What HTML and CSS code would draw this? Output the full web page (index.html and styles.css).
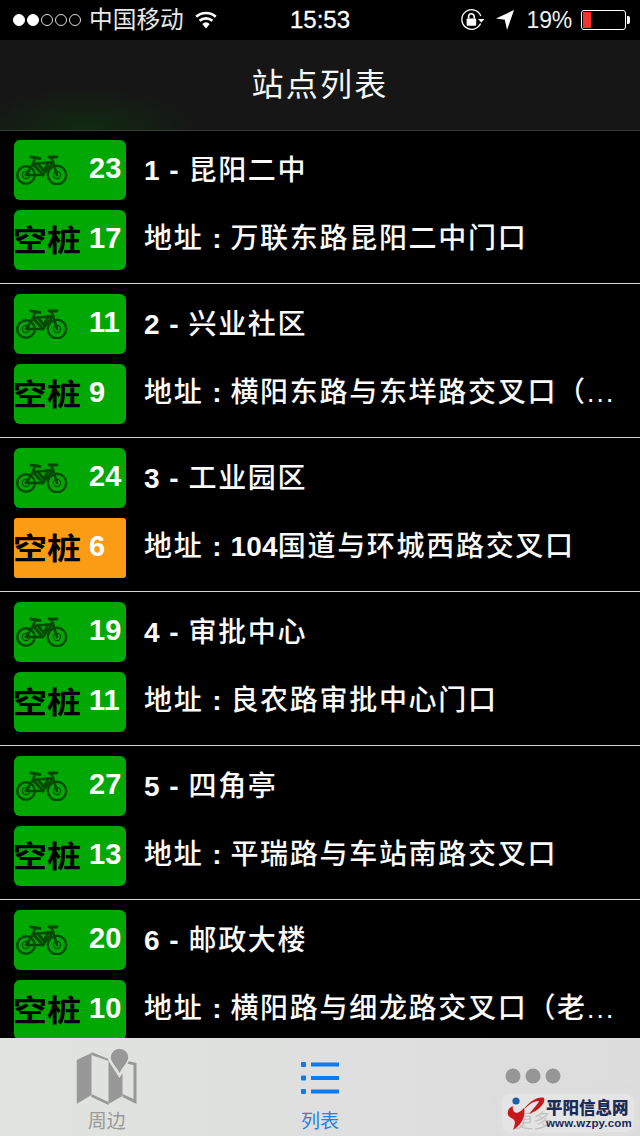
FILE: index.html
```html
<!DOCTYPE html>
<html lang="zh">
<head>
<meta charset="utf-8">
<title>站点列表</title>
<link rel="stylesheet" href="styles.css">
</head>
<body>
<svg class="defs" width="0" height="0" aria-hidden="true">
  <symbol id="bike" viewBox="0 0 52 30">
    <g fill="none" stroke="#044a04" stroke-width="2.4" stroke-linecap="round" stroke-linejoin="round">
      <circle cx="10" cy="20" r="8.800"/>
      <circle cx="41" cy="20" r="9.200"/>
      <circle cx="10" cy="20" r="3.600" stroke-width="1.200"/>
      <circle cx="41" cy="20" r="3.600" stroke-width="1.200"/>
      <path d="M10 20 17 9 37 7 27 20ZM37 7 41 20M17 9 19 3" stroke-width="2.600"/>
      <path d="M17 9 27 20 M22 9 28 16 32 8" stroke-width="2.800"/>
      <path d="M15 2 24 3.500M33 2 41 2M35 2 37 7" stroke-width="2.800"/>
    </g>
  </symbol>
</svg>
<div class="app">
  <header class="status">
    <div class="status-left">
      <span class="signal"><i class="on"></i><i class="on"></i><i></i><i></i><i></i></span>
      <span class="carrier">中国移动</span>
      <svg class="wifi" viewBox="0 0 24 18" width="24" height="18"><path d="M12 17.500 8.300 13a5.600 5.600 0 0 1 7.400 0Z" fill="#fff"/><path d="M5.600 9.800a9.600 9.600 0 0 1 12.800 0M2.200 5.800a14.600 14.600 0 0 1 19.600 0" fill="none" stroke="#fff" stroke-width="2.600"/></svg>
    </div>
    <div class="time">15:53</div>
    <div class="status-right">
      <svg class="lock" viewBox="0 0 24 24" width="24" height="24"><path d="M20.600 15.500A9.800 9.800 0 1 1 20.800 8" fill="none" stroke="#fff" stroke-width="1.300"/><path d="M18 11h6.500l-3.200 3.600Z" fill="#fff"/><rect x="6.600" y="10.400" width="9.600" height="7.400" rx="1" fill="#fff"/><path d="M8.600 10.600V8.600a2.800 2.800 0 0 1 5.600 0v2" fill="none" stroke="#fff" stroke-width="1.600"/></svg>
      <svg class="arrow" viewBox="0 0 18 20" width="18" height="20"><path d="M18 0 0 8.500l8.800 1.200L11 20Z" fill="#fff"/></svg>
      <span class="percent">19%</span>
      <span class="battery"><span class="battery-level"></span></span>
    </div>
  </header>

  <nav class="navbar"><h1>站点列表</h1></nav>

  <main class="list">
    <article class="row">
      <div class="badges">
        <div class="badge"><svg class="bike"><use href="#bike"/></svg><b class="num">23</b></div>
        <div class="badge"><span class="dock">空桩</span><b class="num">17</b></div>
      </div>
      <div class="info"><div class="name"><b>1 - </b>昆阳二中</div><div class="addr">地址<b class="colon">:</b>万联东路昆阳二中门口</div></div>
    </article>
    <article class="row">
      <div class="badges">
        <div class="badge"><svg class="bike"><use href="#bike"/></svg><b class="num">11</b></div>
        <div class="badge"><span class="dock">空桩</span><b class="num">9</b></div>
      </div>
      <div class="info"><div class="name"><b>2 - </b>兴业社区</div><div class="addr">地址<b class="colon">:</b>横阳东路与东垟路交叉口（...</div></div>
    </article>
    <article class="row">
      <div class="badges">
        <div class="badge"><svg class="bike"><use href="#bike"/></svg><b class="num">24</b></div>
        <div class="badge low"><span class="dock">空桩</span><b class="num">6</b></div>
      </div>
      <div class="info"><div class="name"><b>3 - </b>工业园区</div><div class="addr">地址<b class="colon">:</b><b>104</b>国道与环城西路交叉口</div></div>
    </article>
    <article class="row">
      <div class="badges">
        <div class="badge"><svg class="bike"><use href="#bike"/></svg><b class="num">19</b></div>
        <div class="badge"><span class="dock">空桩</span><b class="num">11</b></div>
      </div>
      <div class="info"><div class="name"><b>4 - </b>审批中心</div><div class="addr">地址<b class="colon">:</b>良农路审批中心门口</div></div>
    </article>
    <article class="row">
      <div class="badges">
        <div class="badge"><svg class="bike"><use href="#bike"/></svg><b class="num">27</b></div>
        <div class="badge"><span class="dock">空桩</span><b class="num">13</b></div>
      </div>
      <div class="info"><div class="name"><b>5 - </b>四角亭</div><div class="addr">地址<b class="colon">:</b>平瑞路与车站南路交叉口</div></div>
    </article>
    <article class="row">
      <div class="badges">
        <div class="badge"><svg class="bike"><use href="#bike"/></svg><b class="num">20</b></div>
        <div class="badge"><span class="dock">空桩</span><b class="num">10</b></div>
      </div>
      <div class="info"><div class="name"><b>6 - </b>邮政大楼</div><div class="addr">地址<b class="colon">:</b>横阳路与细龙路交叉口（老...</div></div>
    </article>
  </main>

  <footer class="tabbar">
    <div class="tab tab-map">
      <svg class="tab-icon" viewBox="0 0 61 57" width="61" height="57"><g fill="#989898"><path d="M0 12 15 5V47L0 56Z"/><path d="M15 4 32 11V13L15 7ZM15 46 32 54V57L15 49Z"/><path d="M32 13 43 30 46 25V48L32 56Z"/><path d="M47 12 60 15V56L46 49V46L57 51V17L47 15Z"/></g><path d="M43 0a9.500 9.500 0 0 1 9.500 9.500c0 6-7 10-9.500 17.500-2.500-7.500-9.500-11.500-9.500-17.500A9.500 9.500 0 0 1 43 0Z" fill="#989898" stroke="#e2e4e2" stroke-width="1.500"/></svg>
      <span class="tab-label">周边</span>
    </div>
    <div class="tab tab-list">
      <svg class="tab-icon" viewBox="0 0 38 34" width="38" height="34"><g fill="#0a7bf2"><rect x="0" y="1" width="5" height="5" rx="1"/><rect x="0" y="14.500" width="5" height="5" rx="1"/><rect x="0" y="28" width="5" height="5" rx="1"/><rect x="10" y="1.500" width="28" height="4"/><rect x="10" y="15" width="28" height="4"/><rect x="10" y="28.500" width="28" height="4"/></g></svg>
      <span class="tab-label">列表</span>
    </div>
    <div class="tab tab-more">
      <svg class="tab-icon" viewBox="0 0 56 16" width="56" height="16"><g fill="#969696"><circle cx="8" cy="8" r="7.500"/><circle cx="28" cy="8" r="7.500"/><circle cx="48" cy="8" r="7.500"/></g></svg>
      <span class="tab-label">更多</span>
    </div>
    <div class="watermark">
      <svg class="wm-logo" viewBox="0 0 40 38" width="40" height="38"><circle cx="10" cy="7" r="3.600" fill="#1b5fa8"/><path d="M17 17C22 8 32 2 38 4 40 8 34 16 23 20 27 15 32 10 33 7 27 7 22 11 17 17Z" fill="#c8161d"/><path d="M18 14C20 24 14 32 7 36 9 31 10 27 7 25 3 23 1 21 2 17 3 14 5 13 7 12 6 16 8 19 11 19 14 18 16 16 18 14Z" fill="#c8161d"/></svg>
      <div class="wm-text"><strong>平阳信息网</strong><span>www.wzpy.com</span></div>
    </div>
  </footer>
</div>
</body>
</html>
```
FILE: styles.css
```css
* { box-sizing: border-box; margin: 0; padding: 0; }
html, body { width: 640px; height: 1136px; overflow: hidden; background: #000; }
body { font-family: "Liberation Sans", "Noto Sans CJK SC", sans-serif; color: #fff; }
.defs { position: absolute; }
.app { display: flex; flex-direction: column; width: 640px; height: 1136px; }

.status { flex: 0 0 40px; display: grid; grid-template-columns: 1fr auto 1fr; align-items: center; background: #000; }
.status-left { display: flex; align-items: center; padding-left: 13px; }
.signal { display: flex; gap: 2px; }
.signal i { width: 12px; height: 12px; border-radius: 50%; border: 1px solid #ddd; }
.signal i.on { background: #fff; border-color: #fff; }
.carrier { margin-left: 8px; font-size: 23.700px; line-height: 40px; color: #e8e8e8; }
.wifi { margin-left: 10px; }
.time { font-size: 24px; line-height: 40px; -webkit-text-stroke: 0.3px #fff; }
.status-right { display: flex; align-items: center; justify-content: flex-end; padding-right: 14px; }
.arrow { margin-left: 12px; }
.percent { margin-left: 13px; font-size: 23px; line-height: 40px; color: #eee; letter-spacing: -0.2px; }
.battery { position: relative; display: block; margin-left: 9px; width: 45px; height: 20px; border: 1px solid #fff; border-radius: 3px; padding: 1px; }
.battery::after { content: ""; position: absolute; left: 45px; top: 5px; width: 3px; height: 8px; background: #fff; border-radius: 0 2px 2px 0; }
.battery-level { display: block; width: 8px; height: 16px; background: #f5332d; border-radius: 1px; }

.navbar { position: relative; z-index: 1; flex: 0 0 88px; display: flex; align-items: center; justify-content: center;
  background: radial-gradient(ellipse 110px 40px at 85px 88px, #102a10 0%, rgba(22,22,22,0) 100%), #161616;
  box-shadow: 0 1px 0 #3a3a3a; }
.navbar h1 { font-size: 32px; font-weight: 400; line-height: 90px; letter-spacing: 2.200px; color: #f6f6f6; }

.list { flex: 1 1 0; min-height: 0; overflow: hidden; }
.row { display: flex; height: 154px; padding: 10px 0 13px 14px; border-bottom: 1px solid #d4d4d4; }
.badges { display: flex; flex-direction: column; gap: 10px; flex: 0 0 112px; }
.badge { display: flex; align-items: center; position: relative; width: 112px; height: 60px; border-radius: 6px; background: #02a802; }
.badge.low { background: #fc9c14; border-radius: 3px; }
.bike { width: 52px; height: 30px; margin: 0 0 0 2px; flex: none; filter: blur(0.4px); }
.dock { display: block; width: 70px; flex: none; margin-left: -1px; font-size: 34px; font-weight: 700; line-height: 60px; color: #000; white-space: nowrap; transform: translateY(1px) scaleY(0.86); }
.num { position: absolute; left: 75px; top: -2px; font-size: 29px; line-height: 60px; font-weight: 700; color: #fff; }
.info { display: flex; flex-direction: column; margin-left: 18px; min-width: 0; flex: 1; }
.name, .addr { height: 60px; font-size: 28px; font-weight: 500; line-height: 60px; letter-spacing: 1.700px; white-space: nowrap; color: #fafafa; }
.name { margin-top: 1px; }
.addr { margin-top: 8px; }
.name b, .addr b { font-weight: 700; letter-spacing: 1px; }
.addr b { letter-spacing: 0.200px; }
.addr .colon { display: inline-block; width: 27px; text-align: center; letter-spacing: 0; }

.tabbar { position: relative; flex: 0 0 98px; display: grid; grid-template-columns: repeat(3, 1fr); background: linear-gradient(90deg, #e0e4df 0%, #dedfde 50%, #dcdcdc 100%); overflow: hidden; }
.tab { position: relative; display: flex; justify-content: center; color: #9a9a9a; }
.tab-icon { position: absolute; left: 50%; transform: translateX(-50%); }
.tab-map .tab-icon { top: 10px; filter: blur(0.4px); }
.tab-list { color: #1f82ef; }
.tab-list .tab-icon { top: 23px; }
.tab-more .tab-icon { top: 30px; filter: blur(0.4px); }
.tab-label { position: absolute; top: 73px; font-size: 19px; line-height: 22px; }
.watermark { position: absolute; right: 6px; bottom: 4px; display: flex; align-items: flex-start; padding: 0 2px 0 4px; background: rgba(236,236,236,0.5); box-shadow: 0 0 8px rgba(236,236,236,0.5); border-radius: 8px; }
.wm-logo { margin-top: 0; }
.wm-text { display: flex; flex-direction: column; margin-top: 5px; color: #1a2a55; font-weight: 700; }
.wm-text strong { font-size: 16.500px; line-height: 19px; white-space: nowrap; }
.wm-text span { font-size: 11.500px; line-height: 10px; letter-spacing: 0.200px; white-space: nowrap; }
```
